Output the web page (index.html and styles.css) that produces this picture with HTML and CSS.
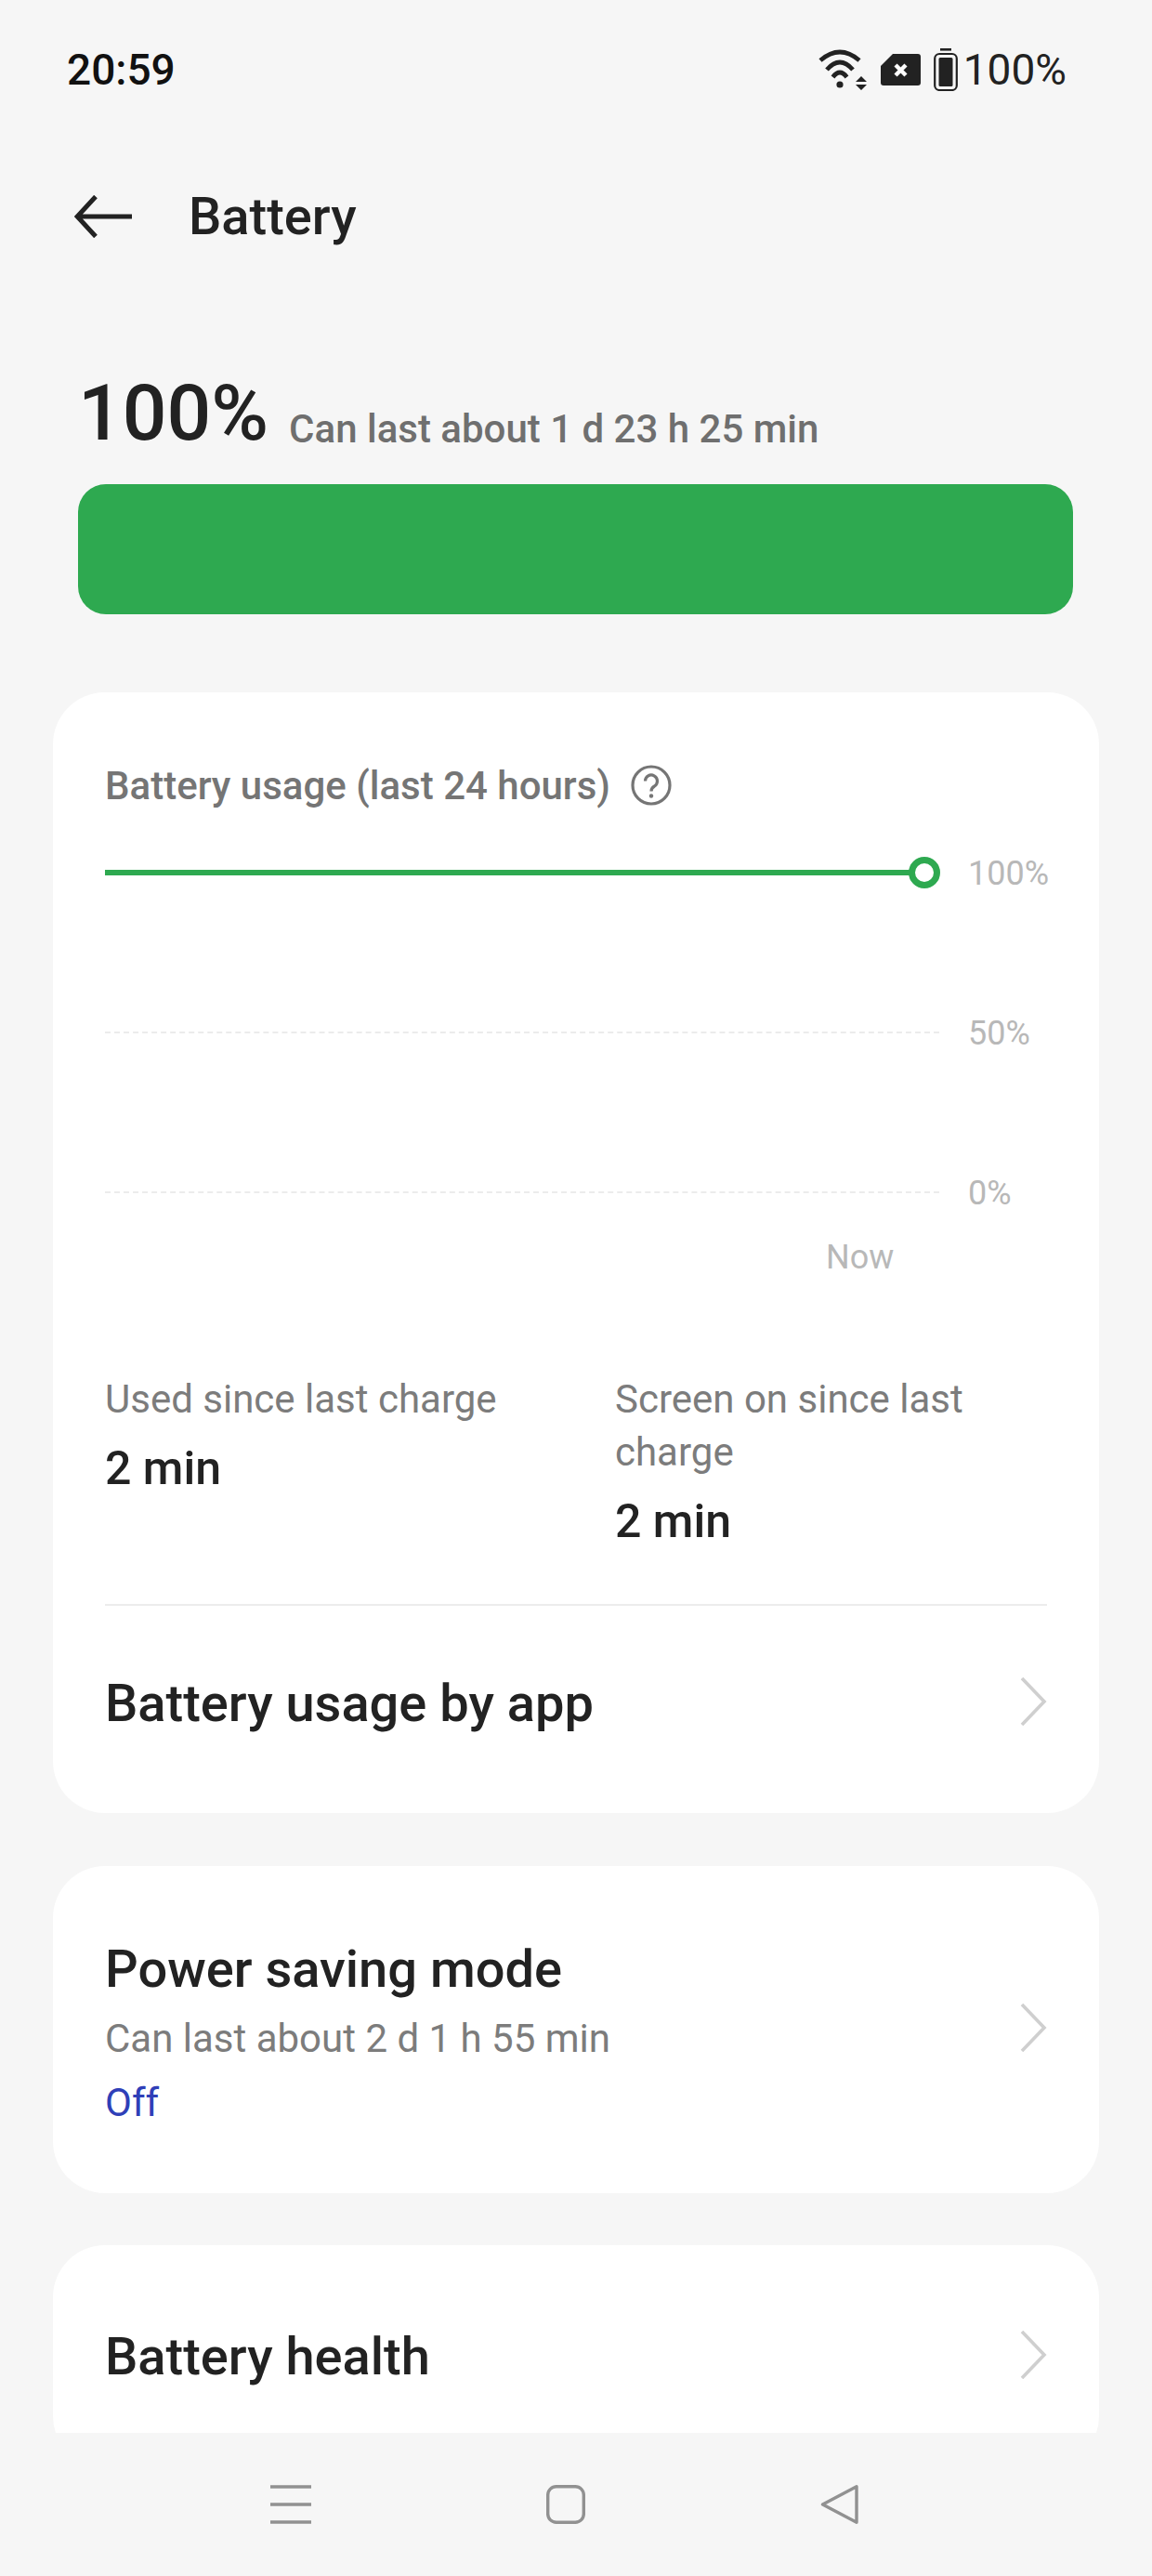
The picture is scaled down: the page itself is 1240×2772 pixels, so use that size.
FILE: index.html
```html
<!DOCTYPE html>
<html lang="en">
<head>
    <meta charset="UTF-8">
    <meta name="viewport" content="width=device-width, initial-scale=1.0">
    <title>Battery</title>
    <link rel="stylesheet" href="styles.css">
</head>
<body>
    <div class="screen">
        <div class="content">
            <!-- Status bar -->
            <div class="status-bar">
                <span class="time">20:59</span>
                <div class="status-icons">
                    <svg class="icon-wifi" viewBox="0 0 52 44" width="52" height="44">
                        <g fill="none" stroke="#222" stroke-width="4.8">
                            <path d="M2 12 Q23 -6 44 12"/>
                            <path d="M9 22 Q23 6 37 22"/>
                            <path d="M15.5 30 Q23 20 30.5 30"/>
                        </g>
                        <circle cx="23" cy="38" r="3.6" fill="#222"/>
                        <path d="M46 29 L52 35 H40 Z M40 38 H52 L46 44 Z" fill="#222"/>
                    </svg>
                    <svg class="icon-sim" viewBox="0 0 43 34" width="43" height="34">
                        <path d="M13 0 H40 Q43 0 43 3 V31 Q43 34 40 34 H3 Q0 34 0 31 V13 Z" fill="#222"/>
                        <path d="M16 12 L27 23 M27 12 L16 23" stroke="#fff" stroke-width="4.4" fill="none"/>
                    </svg>
                    <svg class="icon-battery" viewBox="0 0 26 46" width="26" height="46">
                        <rect x="7" y="0" width="12" height="2.6" fill="#222"/>
                        <rect x="1.2" y="6" width="23.6" height="39" rx="5" fill="none" stroke="#222" stroke-width="2.2"/>
                        <rect x="5.5" y="10" width="15" height="31" rx="1.5" fill="#222"/>
                    </svg>
                    <span class="status-pct">100%</span>
                </div>
            </div>

            <!-- Title -->
            <div class="title-bar">
                <svg class="back" viewBox="0 0 62 46" width="62" height="46">
                    <path d="M23 1.5 L3.2 23 L23 44.5 M3.2 23 H62" fill="none" stroke="#222" stroke-width="5"/>
                </svg>
                <h1>Battery</h1>
            </div>

            <!-- Level -->
            <div class="level">
                <span class="level-pct">100%</span>
                <span class="level-note">Can last about 1 d 23 h 25 min</span>
            </div>
            <div class="level-bar"></div>

            <!-- Usage card -->
            <div class="card card-usage">
                <div class="usage-head">
                    <span>Battery usage (last 24 hours)</span>
                    <svg viewBox="0 0 44 44" width="44" height="44">
                        <circle cx="22" cy="22" r="20" fill="none" stroke="#757575" stroke-width="3.2"/>
                        <path d="M15.5 17.5 A6.5 6.5 0 1 1 25.5 23 Q22 25 22 28.5" fill="none" stroke="#757575" stroke-width="3.2"/>
                        <circle cx="22" cy="33.5" r="2.2" fill="#757575"/>
                    </svg>
                </div>
                <div class="chart">
                    <div class="chart-row">
                        <div class="chart-line chart-line-on"><span class="chart-dot"></span></div>
                        <span class="chart-label">100%</span>
                    </div>
                    <div class="chart-row">
                        <div class="chart-line"></div>
                        <span class="chart-label">50%</span>
                    </div>
                    <div class="chart-row">
                        <div class="chart-line"></div>
                        <span class="chart-label">0%</span>
                    </div>
                    <div class="chart-now">Now</div>
                </div>
                <div class="stats">
                    <div class="stat">
                        <div class="stat-label">Used since last charge</div>
                        <div class="stat-value">2 min</div>
                    </div>
                    <div class="stat">
                        <div class="stat-label">Screen on since last charge</div>
                        <div class="stat-value">2 min</div>
                    </div>
                </div>
                <div class="row row-usage">
                    <span class="row-title">Battery usage by app</span>
                    <svg class="chevron" viewBox="0 0 30 52" width="30" height="52"><path d="M3 1 L27 26 L3 51" fill="none" stroke="#cfcfcf" stroke-width="3.6"/></svg>
                </div>
            </div>

            <!-- Power saving card -->
            <div class="card card-power">
                <div class="row">
                    <div class="row-text">
                        <div class="row-title">Power saving mode</div>
                        <div class="row-sub">Can last about 2 d 1 h 55 min</div>
                        <div class="row-state">Off</div>
                    </div>
                    <svg class="chevron" viewBox="0 0 30 52" width="30" height="52"><path d="M3 1 L27 26 L3 51" fill="none" stroke="#cfcfcf" stroke-width="3.6"/></svg>
                </div>
            </div>

            <!-- Health card, cut off by the nav bar -->
            <div class="card card-health">
                <div class="row">
                    <span class="row-title">Battery health</span>
                    <svg class="chevron" viewBox="0 0 30 52" width="30" height="52"><path d="M3 1 L27 26 L3 51" fill="none" stroke="#cfcfcf" stroke-width="3.6"/></svg>
                </div>
            </div>
        </div>

        <!-- Navigation bar -->
        <div class="nav-bar">
            <svg viewBox="0 0 44 42" width="44" height="42">
                <path d="M0 2 H44 M0 21 H44 M0 40 H44" stroke="#919191" stroke-width="3.6" fill="none"/>
            </svg>
            <svg viewBox="0 0 42 42" width="42" height="42">
                <rect x="1.7" y="1.7" width="38.6" height="38.6" rx="9" fill="none" stroke="#919191" stroke-width="3.4"/>
            </svg>
            <svg viewBox="0 0 42 42" width="42" height="42">
                <path d="M39 1.8 V40.2 L2.5 21 Z" fill="none" stroke="#919191" stroke-width="3.4" stroke-linejoin="round"/>
            </svg>
        </div>
    </div>
</body>
</html>
```

FILE: styles.css
```css
* {
    box-sizing: border-box;
}
body {
    margin: 0;
    font-family: Roboto, "Liberation Sans", sans-serif;
    background-color: #f6f6f6;
    color: #222;
}
.screen {
    width: 1240px;
    height: 2772px;
    display: flex;
    flex-direction: column;
    overflow: hidden;
}
.content {
    height: 2618px;
    overflow: hidden;
    flex: none;
}

/* status bar */
.status-bar {
    height: 150px;
    padding: 52px 92px 0 72px;
    display: flex;
    justify-content: space-between;
    align-items: flex-start;
}
.time {
    font-size: 46px;
    font-weight: 500;
    line-height: 46px;
    color: #111;
}
.status-icons {
    display: flex;
    align-items: center;
    height: 46px;
}
.icon-wifi {
    margin-right: 15px;
}
.icon-sim {
    margin-right: 14px;
}
.icon-battery {
    margin-right: 6px;
}
.status-pct {
    font-size: 46px;
    line-height: 46px;
    color: #222;
}

/* title */
.title-bar {
    height: 166px;
    padding: 58px 0 0 80px;
    display: flex;
    align-items: flex-start;
}
.back {
    margin: 2px 61px 0 0;
}
h1 {
    margin: 0;
    font-size: 56px;
    font-weight: 500;
    line-height: 50px;
}

/* level */
.level {
    height: 86px;
    margin-top: 86px;
    padding-left: 84px;
    display: flex;
    align-items: flex-end;
}
.level-pct {
    font-size: 84px;
    font-weight: 500;
    line-height: 86px;
}
.level-note {
    margin-left: 22px;
    font-size: 42px;
    font-weight: 500;
    line-height: 52px;
    color: #6f6f6f;
}
.level-bar {
    width: 1071px;
    height: 140px;
    margin: 33px 0 84px 84px;
    border-radius: 30px;
    background: #2ea950;
}

/* cards */
.card {
    width: 1126px;
    margin: 0 57px;
    padding: 0 56px;
    background: #fff;
    border-radius: 56px;
}
.card-usage {
    height: 1206px;
    padding-top: 72px;
    margin-bottom: 57px;
}
.card-power {
    height: 352px;
    margin-bottom: 56px;
}
.card-health {
    height: 240px;
}

.usage-head {
    display: flex;
    align-items: center;
    height: 56px;
    gap: 22px;
    font-size: 42px;
    font-weight: 500;
    color: #757575;
}

/* chart */
.chart {
    margin-top: 55px;
}
.chart-row {
    height: 172px;
    display: flex;
    align-items: flex-start;
}
.chart-line {
    position: relative;
    flex: none;
    width: 898px;
    height: 2px;
    margin-top: 10px;
    border-top: 2px dashed #ececec;
}
.chart-line-on {
    width: 884px;
    height: 6px;
    margin-top: 8px;
    border-top: 0;
    background: #2ea950;
}
.chart-dot {
    position: absolute;
    right: -15px;
    top: -14px;
    width: 34px;
    height: 34px;
    border: 7px solid #2ea950;
    border-radius: 50%;
    background: #fff;
}
.chart-label {
    flex: none;
    margin-left: 31px;
    font-size: 36px;
    line-height: 24px;
    color: #b8b8b8;
}
.chart-line-on + .chart-label {
    margin-left: 45px;
}
.chart-now {
    margin: -112px 0 0 776px;
    font-size: 36px;
    line-height: 42px;
    color: #b8b8b8;
}

/* stats */
.stats {
    margin-top: 103px;
    display: grid;
    grid-template-columns: 549px 1fr;
    height: 249px;
}
.stat-label {
    font-size: 42px;
    line-height: 57px;
    color: #7c7c7c;
}
.stat-value {
    margin-top: 18px;
    font-size: 50px;
    line-height: 56px;
    font-weight: 500;
    color: #222;
}

/* rows */
.row {
    height: 100%;
    display: flex;
    justify-content: space-between;
    align-items: center;
}
.row-usage {
    height: 212px;
    border-top: 2px solid #ececec;
}
.row-text {
    padding-top: 9px;
}
.row-title {
    font-size: 56px;
    font-weight: 500;
    line-height: 66px;
    color: #222;
}
.row-sub {
    margin-top: 14px;
    font-size: 42px;
    line-height: 56px;
    color: #7c7c7c;
}
.row-state {
    margin-top: 13px;
    font-size: 42px;
    line-height: 56px;
    color: #2f3fb8;
}
.chevron {
    flex: none;
    margin-bottom: 5px;
}

/* nav bar */
.nav-bar {
    height: 154px;
    padding: 56px 0 0 291px;
    display: flex;
    align-items: flex-start;
    gap: 253px;
    background: #f6f6f6;
}
```
